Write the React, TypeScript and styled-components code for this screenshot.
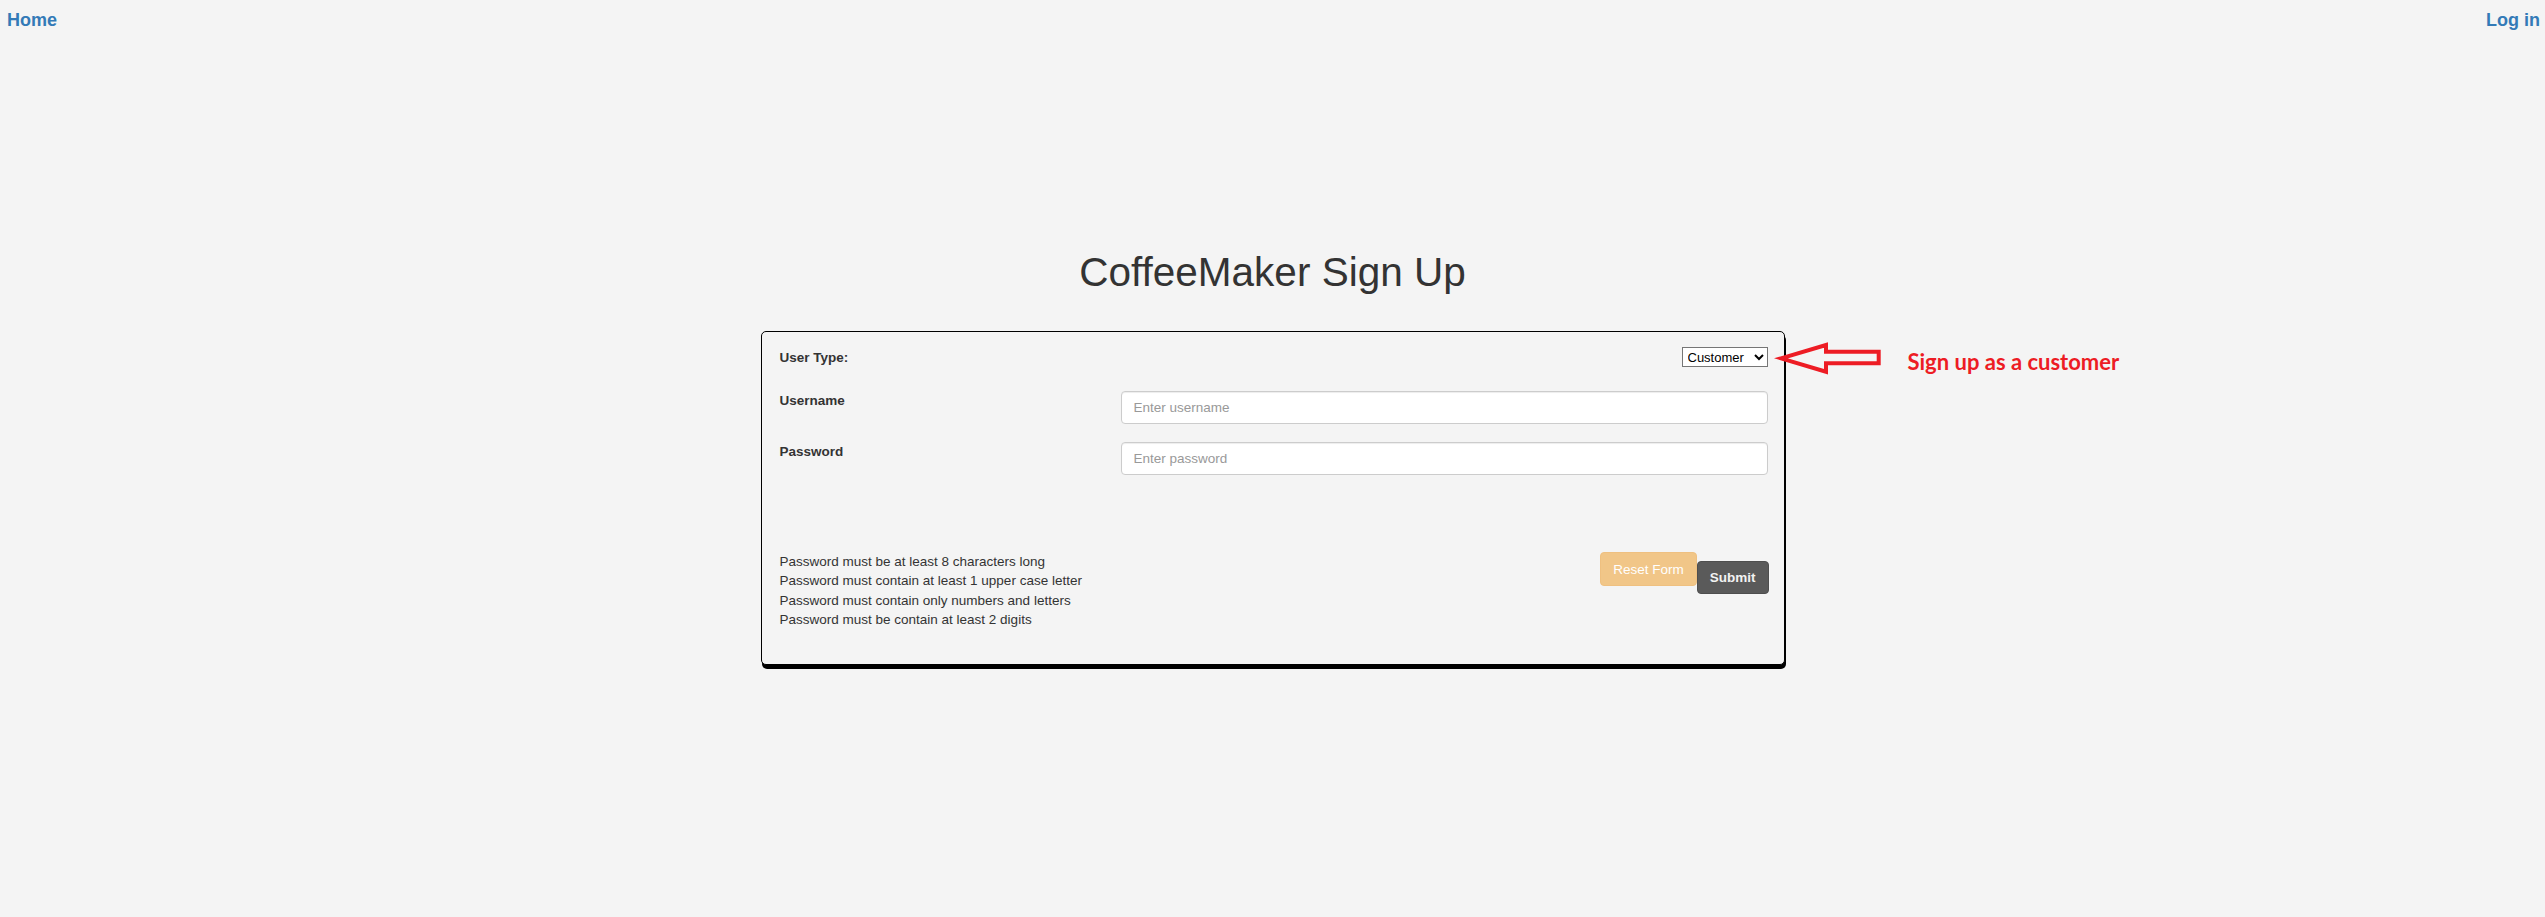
import React from "react";
import styled, { createGlobalStyle } from "styled-components";

const GlobalStyle = createGlobalStyle`
  html, body {
    margin: 0;
    padding: 0;
    background: #f4f4f4;
    font-family: "Liberation Sans", Arial, Helvetica, sans-serif;
    color: #333;
  }
  * { box-sizing: border-box; }
`;

const Page = styled.div`
  min-height: 917px;
  background: #f4f4f4;
`;

const Nav = styled.nav`
  display: flex;
  justify-content: space-between;
  align-items: flex-start;
  padding: 10px 5px 0 7px;
`;

const NavLink = styled.a`
  font-size: 18px;
  font-weight: 700;
  line-height: normal;
  color: #337ab7;
  text-decoration: none;
  cursor: pointer;
`;

const Main = styled.main`
  display: flex;
  flex-direction: column;
  align-items: center;
  padding-top: 218px;
`;

const Title = styled.h1`
  margin: 0;
  font-size: 40.5px;
  font-weight: 400;
  line-height: normal;
  color: #333;
`;

const Card = styled.section`
  position: relative;
  width: 1024px;
  margin-top: 35px;
  padding: 15px 16px 35px 18px;
  border: 1px solid #000;
  border-radius: 5px;
  box-shadow: 1px 4px 0 #000;
  background: #f4f4f4;
`;

const TypeRow = styled.div`
  display: flex;
  justify-content: space-between;
  align-items: center;
  height: 20px;
`;

const Label = styled.label<{ $offset?: number }>`
  font-size: 13.5px;
  font-weight: 700;
  line-height: normal;
  color: #333;
  padding-top: ${(p) => p.$offset ?? 0}px;
`;

const Select = styled.select`
  width: 86px;
  height: 20px;
  font-family: "Liberation Sans", Arial, sans-serif;
  font-size: 13px;
  color: #000;
  background: #fff;
  border: 1px solid #767676;
  border-radius: 0;
  padding: 0 1px;
`;

const FieldGrid = styled.div`
  display: grid;
  grid-template-columns: 341px 1fr;
  row-gap: 18px;
  margin-top: 24px;
`;

const Input = styled.input`
  height: 33px;
  width: 100%;
  padding: 0 12px;
  font-family: "Liberation Sans", Arial, sans-serif;
  font-size: 13.5px;
  color: #555;
  background: #fff;
  border: 1px solid #ccc;
  border-radius: 4px;
  box-shadow: inset 0 1px 1px rgba(0, 0, 0, 0.075);
  &::placeholder {
    color: #999;
  }
`;

const Footer = styled.div`
  display: flex;
  justify-content: space-between;
  align-items: flex-start;
  margin-top: 77px;
`;

const Rules = styled.ul`
  margin: 0;
  padding: 0;
  list-style: none;
`;

const Rule = styled.li`
  font-size: 13.5px;
  line-height: 19.3px;
  color: #333;
`;

const Buttons = styled.div`
  display: flex;
  align-items: flex-start;
  margin-right: -1px;
`;

const Button = styled.button<{ $variant: "reset" | "submit" }>`
  font-family: "Liberation Sans", Arial, sans-serif;
  font-size: 13.5px;
  padding: 0 12px;
  border-radius: 4px;
  color: #fff;
  cursor: pointer;
  ${(p) =>
    p.$variant === "reset"
      ? `
    height: 34px;
    font-weight: 400;
    background: #f1c688;
    border: 1px solid #efc080;
  `
      : `
    height: 33px;
    margin-top: 9px;
    font-weight: 700;
    color: #f2f2f2;
    background: #5a5a5a;
    border: 1px solid #4e4e4e;
  `}
`;

const Annotation = styled.div`
  position: absolute;
  left: 1012px;
  top: 8px;
  display: flex;
  align-items: flex-start;
  gap: 24px;
  pointer-events: none;
`;

const AnnotationText = styled.span`
  margin-top: 8px;
  font-family: Lato, "Open Sans", sans-serif;
  font-size: 22px;
  font-weight: 700;
  line-height: normal;
  color: #ed1c24;
  white-space: nowrap;
`;

const Arrow = () => (
  <svg width="110" height="36" viewBox="0 0 110 36" fill="none">
    <polygon
      points="7,18.3 52,5 52,11.7 104.7,11.7 104.7,23.3 52,23.3 52,31.7"
      stroke="#ed1c24"
      strokeWidth="4"
      strokeLinejoin="miter"
      fill="none"
    />
  </svg>
);

export default function App() {
  return (
    <Page>
      <GlobalStyle />
      <Nav>
        <NavLink>Home</NavLink>
        <NavLink>Log in</NavLink>
      </Nav>
      <Main>
        <Title>CoffeeMaker Sign Up</Title>
        <Card>
          <TypeRow>
            <Label>User Type:</Label>
            <Select defaultValue="customer">
              <option value="customer">Customer</option>
              <option value="staff">Staff</option>
            </Select>
          </TypeRow>
          <FieldGrid>
            <Label $offset={2}>Username</Label>
            <Input type="text" placeholder="Enter username" />
            <Label $offset={2}>Password</Label>
            <Input type="password" placeholder="Enter password" />
          </FieldGrid>
          <Footer>
            <Rules>
              <Rule>Password must be at least 8 characters long</Rule>
              <Rule>Password must contain at least 1 upper case letter</Rule>
              <Rule>Password must contain only numbers and letters</Rule>
              <Rule>Password must be contain at least 2 digits</Rule>
            </Rules>
            <Buttons>
              <Button $variant="reset" type="button">Reset Form</Button>
              <Button $variant="submit" type="submit">Submit</Button>
            </Buttons>
          </Footer>
          <Annotation>
            <Arrow />
            <AnnotationText>Sign up as a customer</AnnotationText>
          </Annotation>
        </Card>
      </Main>
    </Page>
  );
}
